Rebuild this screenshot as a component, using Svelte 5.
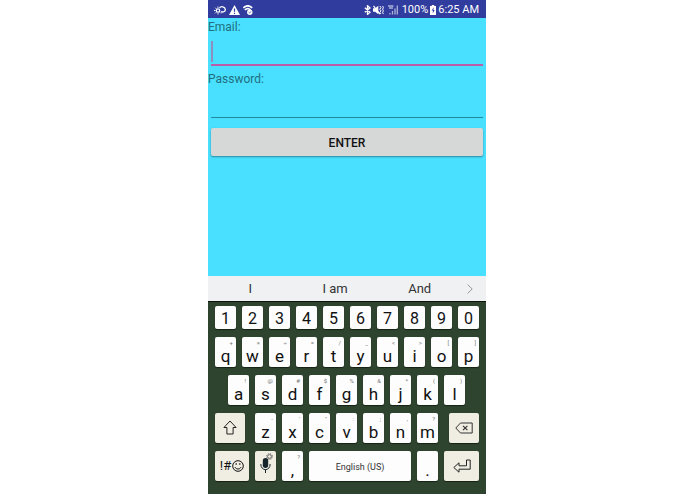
<script lang="ts">
	let email = $state('');
	let password = $state('');
	let focused = $state('email');

	const suggestions = ['I', 'I am', 'And'];

	const numberRow = '1234567890'.split('');
	const topRow = [
		['q', '+'],
		['w', '×'],
		['e', '÷'],
		['r', '='],
		['t', '/'],
		['y', '_'],
		['u', '<'],
		['i', '>'],
		['o', '['],
		['p', ']']
	];
	const homeRow = [
		['a', '!'],
		['s', '@'],
		['d', '#'],
		['f', '$'],
		['g', '%'],
		['h', '&'],
		['j', '*'],
		['k', '('],
		['l', ')']
	];
	const bottomRow = [
		['z', '-'],
		['x', "'"],
		['c', '"'],
		['v', ':'],
		['b', ';'],
		['n', ','],
		['m', '?']
	];

	function type(text: string) {
		if (focused === 'email') email += text;
		else password += text;
	}

	function erase() {
		if (focused === 'email') email = email.slice(0, -1);
		else password = password.slice(0, -1);
	}
</script>

{#snippet letterKey(letter: string, hint: string)}
	<button class="key" type="button" onclick={() => type(letter)}>
		<span class="hint">{hint}</span>
		{letter}
	</button>
{/snippet}

<main class="phone">
	<header class="status-bar">
		<div class="status-left">
			<svg width="12" height="10" viewBox="0 0 12 10" fill="none" stroke="currentColor" aria-hidden="true">
				<circle cx="4" cy="5.5" r="1.7" stroke-width="1.2" />
				<path d="M4 1.5v1.3M4 8.2v1.3M0 5.5h1.5M1.1 2.7l1 1M1.1 8.300l1-1M6 7.500l.9.9" />
				<path d="M5.500 3C6.800 1 11 1.300 11.300 4.400c.2 2-1.500 2.900-4.500 2.500" stroke-width="1.300" />
			</svg>
			<svg width="11" height="10" viewBox="0 0 11 10" aria-hidden="true">
				<path d="M5.500 0 11 10H0z" fill="currentColor" />
				<path d="M5.500 3.500v3.300M5.500 7.700v1.200" stroke="#303d9e" stroke-width="1.200" />
			</svg>
			<svg width="10" height="10" viewBox="0 0 10 10" fill="none" stroke="currentColor" aria-hidden="true">
				<path d="M.3 2.800C3 .4 6.500.4 9.200 2.800M1.800 4.900C3.700 3.300 5.800 3.300 7.500 4.900" stroke-width="1.700" />
				<circle cx="6.800" cy="7.200" r="2.700" fill="currentColor" stroke="none" />
				<path d="m5.600 7.200 1 .9 1.400-1.700" stroke="#303d9e" stroke-width=".7" />
			</svg>
		</div>
		<div class="status-right">
			<svg width="7" height="10" viewBox="0 0 7 10" fill="none" stroke="currentColor" stroke-width="1.300" aria-hidden="true">
				<path d="m.8 2.700 5.200 4.500-2.500 2.200V.7l2.500 2.200L.8 7.300" />
			</svg>
			<svg width="11" height="10" viewBox="0 0 11 10" aria-hidden="true">
				<path d="M0 3.200h2.200L5.300.8v8.400L2.200 6.800H0z" fill="currentColor" />
				<path d="M.5.800 7 9.200" fill="none" stroke="currentColor" stroke-width="1.200" />
				<path d="m6.800 1 1.200 1.600-1.200 1.600L8 5.800 6.800 7.400 8 9M9.600 1l.8 1.600-.8 1.600.8 1.600-.8 1.600.8 1.600" fill="none" stroke="currentColor" />
			</svg>
			<svg class="signal" width="10" height="10" viewBox="0 0 10 10" aria-hidden="true">
				<path d="M0 1h5.500M1 3h4M2 9.500V8M4.500 9.500V6M7 9.500V3.500M9.300 9.500V.5" fill="none" stroke="currentColor" stroke-width="1.300" />
			</svg>
			<span>100%</span>
			<svg width="6" height="10" viewBox="0 0 6 10" aria-hidden="true">
				<path d="M1.800 0h2.400v1H6v9H0V1h1.800z" fill="currentColor" />
				<path d="M3.700 2.200 1.700 5.500H3L2.700 8.500l2-3.600H3.400z" fill="#303d9e" />
			</svg>
			<time>6:25 AM</time>
		</div>
	</header>

	<form class="login" onsubmit={(e) => e.preventDefault()}>
		<label for="email">Email:</label>
		<div class="field" class:active={focused === 'email'}>
			<input id="email" type="text" bind:value={email} onfocus={() => (focused = 'email')} />
		</div>
		<label for="password">Password:</label>
		<div class="field" class:active={focused === 'password'}>
			<input
				id="password"
				type="password"
				bind:value={password}
				onfocus={() => (focused = 'password')}
			/>
		</div>
		<button class="enter" type="submit">ENTER</button>
	</form>

	<div class="suggestions">
		{#each suggestions as word}
			<button type="button" onclick={() => type(word + ' ')}>{word}</button>
		{/each}
		<button class="more" type="button" aria-label="More suggestions">
			<svg width="6" height="10" viewBox="0 0 6 10" fill="none" stroke="#999" aria-hidden="true">
				<path d="M.6.600 5.200 5 .6 9.400" />
			</svg>
		</button>
	</div>

	<section class="keyboard" aria-label="Keyboard">
		<div class="row numbers">
			{#each numberRow as n}
				<button class="key" type="button" onclick={() => type(n)}>{n}</button>
			{/each}
		</div>
		<div class="row">
			{#each topRow as [letter, hint]}
				{@render letterKey(letter, hint)}
			{/each}
		</div>
		<div class="row home">
			{#each homeRow as [letter, hint]}
				{@render letterKey(letter, hint)}
			{/each}
		</div>
		<div class="row">
			<button class="key special shift" type="button" aria-label="Shift">
				<svg width="14" height="15" viewBox="0 0 14 15" fill="none" stroke="#222" aria-hidden="true">
					<path d="M7 1 .9 7.500h3v6.500h6.200V7.500h3z" />
				</svg>
			</button>
			{#each bottomRow as [letter, hint]}
				{@render letterKey(letter, hint)}
			{/each}
			<button class="key special delete" type="button" aria-label="Delete" onclick={erase}>
				<svg width="18" height="12" viewBox="0 0 18 12" fill="none" stroke="#333" aria-hidden="true">
					<path d="M.8 6 5.500 1h11.700v10H5.500z" />
					<path d="m8 3.800 4.400 4.400M12.400 3.800 8 8.200" stroke-width="1.200" />
				</svg>
			</button>
		</div>
		<div class="row">
			<button class="key special symbols" type="button" aria-label="Symbols and emoji">
				!#
				<svg width="12" height="12" viewBox="0 0 12 12" fill="none" stroke="#111" aria-hidden="true">
					<circle cx="6" cy="6" r="5.300" />
					<path d="M3 7.200c1 2.400 5 2.400 6 0" />
					<path d="M4.200 3.300v1.500M7.800 3.300v1.500" stroke-width="1.200" />
				</svg>
			</button>
			<button class="key special" type="button" aria-label="Voice input">
				<span class="hint">
					<svg width="7" height="7" viewBox="0 0 7 7" fill="none" stroke="#666" aria-hidden="true">
						<circle cx="3.500" cy="3.500" r="1.900" />
						<circle cx="3.500" cy="3.500" r="2.900" stroke-dasharray="1.140" />
					</svg>
				</span>
				<svg width="11" height="15" viewBox="0 0 11 15" aria-hidden="true">
					<rect x="2.800" y="0" width="5.400" height="10" rx="2.700" fill="#16252b" />
					<path d="M.8 6c0 7.500 9.400 7.500 9.400 0M5.500 11.500V15" fill="none" stroke="#16252b" />
				</svg>
			</button>
			{@render letterKey(',', '?')}
			<button class="key space" type="button" onclick={() => type(' ')}>English (US)</button>
			<button class="key" type="button" onclick={() => type('.')}>.</button>
			<button class="key special return" type="button" aria-label="Return">
				<svg width="18" height="14" viewBox="0 0 18 14" fill="none" stroke="#222" aria-hidden="true">
					<path d="M.8 8.500 6 3.800v3h7.500V1h3.700v9.200H6v3z" />
				</svg>
			</button>
		</div>
	</section>
</main>

<style>
	:global(body) {
		background: #fff;
		padding-right: 1px;
	}

	.phone {
		display: flex;
		flex-direction: column;
		width: 100%;
		max-width: 278px;
		min-height: 100vh;
		margin: 0 auto;
		background: #49e0ff;
		font-family: Roboto, 'Liberation Sans', sans-serif;
		color: #111;
	}

	button,
	input {
		font: inherit;
		color: inherit;
		border: none;
		padding: 0;
		margin: 0;
	}

	svg {
		display: block;
		flex: none;
	}

	/* Status bar */
	.status-bar {
		display: flex;
		justify-content: space-between;
		align-items: center;
		height: 18px;
		padding: 1px 7px 0 6px;
		box-sizing: border-box;
		background: #303d9e;
		color: #fff;
		font-size: 11px;
		line-height: 17px;
	}

	.status-left,
	.status-right {
		display: flex;
		align-items: center;
		gap: 3px;
	}

	.status-right {
		gap: 2px;
	}

	.signal {
		opacity: 0.6;
		margin: 0 2px;
	}

	/* Login form */
	.login {
		display: flex;
		flex-direction: column;
		flex: 1;
	}

	.login label {
		padding-top: 1px;
		font-size: 12px;
		line-height: 16px;
		color: #1f6f80;
	}

	.field {
		margin: 0 3px 4px;
		padding: 6px 0 3px;
		border-bottom: 1px solid #22889c;
	}

	.field.active {
		padding-bottom: 2px;
		border-bottom: 2px solid #ba5ca8;
	}

	.field input {
		display: block;
		width: 100%;
		height: 21px;
		background: transparent;
		border-left: 2px solid transparent;
		outline: none;
		box-sizing: border-box;
		font-size: 14px;
	}

	.field.active input {
		border-left-color: #8d8fc0;
	}

	.enter {
		height: 28px;
		margin: 6px 3px 0;
		padding-top: 1px;
		border-radius: 2px;
		background: #d6d7d7;
		box-shadow: 0 1px 2px rgba(0, 0, 0, 0.4);
		font-size: 12px;
		font-weight: 500;
	}

	/* Word suggestions */
	.suggestions {
		display: flex;
		height: 25px;
		background: #f0f1f3;
		border-bottom: 1px solid #0c140c;
		font-size: 13px;
		color: #333;
	}

	.suggestions button {
		flex: 1;
		background: none;
	}

	.suggestions .more {
		display: flex;
		flex: none;
		align-items: center;
		justify-content: center;
		width: 24px;
		padding-right: 8px;
	}

	/* Keyboard */
	.keyboard {
		display: flex;
		flex-direction: column;
		gap: 8px;
		padding: 4px 7px 13px;
		background: #2f442f;
	}

	.row {
		display: flex;
		gap: 6px;
		height: 30px;
	}

	.row.numbers {
		height: 23px;
	}

	.row.home {
		padding: 0 14px 0 13px;
	}

	.key {
		position: relative;
		display: flex;
		flex: 21 1 0;
		align-items: flex-end;
		justify-content: center;
		min-width: 0;
		padding-bottom: 1px;
		border-radius: 2px;
		background: #fdfdfd;
		box-shadow: 0 1px 1px #152215;
		font-size: 17px;
		line-height: 20px;
	}

	.numbers .key {
		align-items: center;
		padding: 2px 0 0;
		font-size: 16px;
	}

	.hint {
		position: absolute;
		top: 2px;
		right: 3px;
		font-size: 6px;
		line-height: 7px;
		color: #777;
	}

	.special {
		align-items: center;
		background: #f0eee2;
	}

	.shift {
		flex-grow: 30;
		margin-right: 4px;
	}

	.delete {
		flex-grow: 30;
		margin-left: 5px;
	}

	.symbols {
		flex-grow: 34;
		gap: 1px;
		font-size: 13px;
	}

	.space {
		flex-grow: 102;
		align-items: center;
		padding-top: 3px;
		font-size: 9px;
		color: #333;
	}

	.return {
		flex-grow: 35;
	}
</style>
